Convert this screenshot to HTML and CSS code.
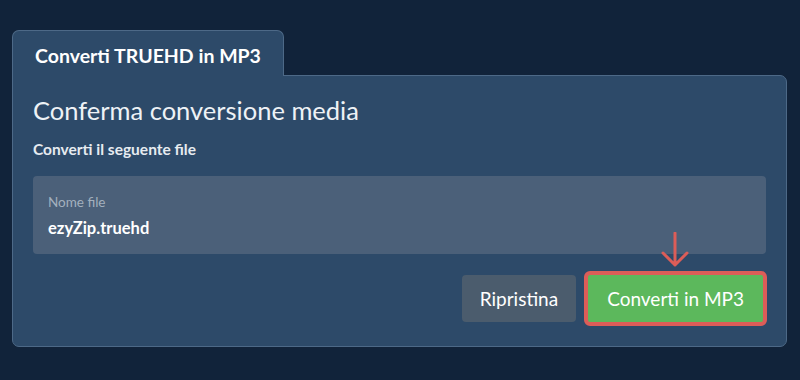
FILE: index.html
```html
<!DOCTYPE html>
<html lang="it">
<head>
    <meta charset="UTF-8">
    <meta name="viewport" content="width=device-width, initial-scale=1.0">
    <title>Converti TRUEHD in MP3</title>
    <link rel="stylesheet" href="styles.css">
</head>
<body>
    <div class="converter">
        <div class="tabs">
            <div class="tab">Converti TRUEHD in MP3</div>
        </div>
        <div class="panel">
            <h2 class="title">Conferma conversione media</h2>
            <p class="subtitle">Converti il seguente file</p>

            <div class="file-box">
                <div class="file-label">Nome file</div>
                <div class="file-name">ezyZip.truehd</div>
            </div>

            <div class="actions">
                <button class="btn btn-reset">Ripristina</button>
                <div class="convert-wrap">
                    <svg class="pointer" width="32" height="36" viewBox="0 0 32 36">
                        <path d="M16 1 V33 M4 21 L16 33 L28 21" fill="none" stroke="#dc5d58" stroke-width="3" stroke-linecap="round" stroke-linejoin="round"/>
                    </svg>
                    <button class="btn btn-convert">Converti in MP3</button>
                </div>
            </div>
        </div>
    </div>
</body>
</html>
```

FILE: styles.css
```css
* {
    margin: 0;
    padding: 0;
    box-sizing: border-box;
}

body {
    font-family: Lato, 'Open Sans', sans-serif;
    background: #11233a;
    color: #edf1f5;
    width: 800px;
    height: 380px;
    padding: 30px 13px 0 12px;
}

.tabs {
    display: flex;
}

.tab {
    position: relative;
    z-index: 1;
    background: #2d4a69;
    border: 1px solid #4d6987;
    border-bottom: none;
    border-radius: 7px 7px 0 0;
    padding: 13px 22px 8px;
    margin-bottom: -1px;
    font-size: 19.5px;
    font-weight: 700;
    line-height: 24px;
    color: #ffffff;
}

.panel {
    background: #2d4a69;
    border: 1px solid #4d6987;
    border-radius: 0 7px 7px 7px;
    padding: 20px 20px 20px;
}

.title {
    font-size: 25.5px;
    font-weight: 400;
    line-height: 28px;
    color: #eef2f6;
    margin-bottom: 15px;
}

.subtitle {
    font-size: 15.5px;
    font-weight: 700;
    line-height: 20px;
    color: #e6ebf0;
    margin-bottom: 17px;
}

.file-box {
    background: #4b6079;
    border-radius: 4px;
    padding: 17px 15px 15px;
}

.file-label {
    font-size: 13.5px;
    line-height: 18px;
    color: #a3b0be;
}

.file-name {
    font-size: 16.5px;
    font-weight: 700;
    line-height: 22px;
    color: #ffffff;
    margin-top: 6px;
}

.actions {
    display: flex;
    justify-content: flex-end;
    align-items: center;
    gap: 8px;
    margin-top: 17px;
    margin-right: -1px;
}

.btn {
    font-family: Lato, 'Open Sans', sans-serif;
    font-size: 19px;
    line-height: 25px;
    color: #ffffff;
    border: none;
    border-radius: 4px;
    cursor: pointer;
}

.btn-reset {
    background: #4b5c6d;
    padding: 11px 18px;
}

.convert-wrap {
    position: relative;
}

.pointer {
    position: absolute;
    left: 75px;
    top: -39px;
}

.btn-convert {
    background: #5cb85c;
    border: 4px solid #dc5d58;
    border-radius: 6px;
    padding: 11px 19px;
}
```
